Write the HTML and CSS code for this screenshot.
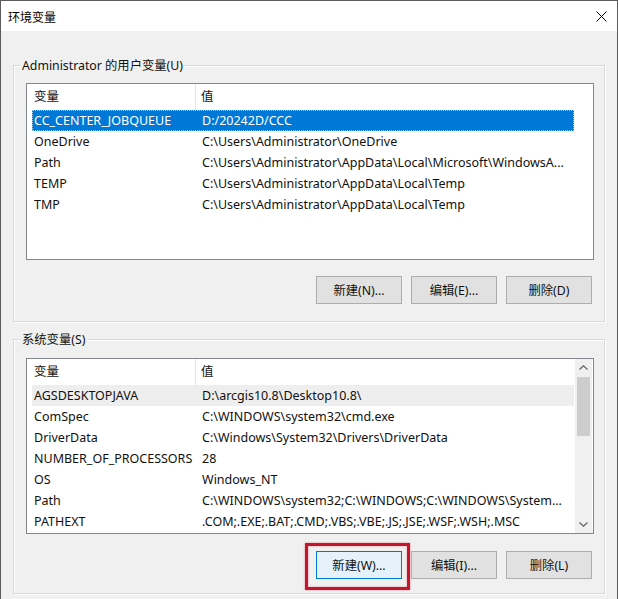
FILE: index.html
```html
<!DOCTYPE html>
<html lang="zh-CN">
<head>
<meta charset="utf-8">
<title>环境变量</title>
<link rel="stylesheet" href="styles.css">
</head>
<body>
<div class="window">
  <div class="titlebar">
    <span class="title">环境变量</span>
    <span class="close" aria-label="关闭">
      <svg width="11" height="11" viewBox="0 0 11 11"><path d="M0.5 0.5 L10.5 10.5 M10.5 0.5 L0.5 10.5" stroke="#000" stroke-width="1" fill="none"/></svg>
    </span>
  </div>

  <div class="group group-user">
    <div class="group-title">Administrator 的用户变量(U)</div>
    <div class="listview lv-user">
      <div class="lv-main">
        <div class="lv-header">
          <div class="hcell hc1">变量</div>
          <div class="hcell hc2">值</div>
        </div>
        <div class="row selected"><div class="c1">CC_CENTER_JOBQUEUE</div><div class="c2">D:/20242D/CCC</div></div>
        <div class="row"><div class="c1">OneDrive</div><div class="c2">C:\Users\Administrator\OneDrive</div></div>
        <div class="row"><div class="c1">Path</div><div class="c2">C:\Users\Administrator\AppData\Local\Microsoft\WindowsA...</div></div>
        <div class="row"><div class="c1">TEMP</div><div class="c2">C:\Users\Administrator\AppData\Local\Temp</div></div>
        <div class="row"><div class="c1">TMP</div><div class="c2">C:\Users\Administrator\AppData\Local\Temp</div></div>
      </div>
    </div>
    <div class="buttons">
      <button class="btn">新建(N)...</button>
      <button class="btn">编辑(E)...</button>
      <button class="btn">删除(D)</button>
    </div>
  </div>

  <div class="group group-sys">
    <div class="group-title">系统变量(S)</div>
    <div class="listview lv-sys">
      <div class="lv-main">
        <div class="lv-header">
          <div class="hcell hc1">变量</div>
          <div class="hcell hc2">值</div>
        </div>
        <div class="row hot"><div class="c1">AGSDESKTOPJAVA</div><div class="c2">D:\arcgis10.8\Desktop10.8\</div></div>
        <div class="row"><div class="c1">ComSpec</div><div class="c2">C:\WINDOWS\system32\cmd.exe</div></div>
        <div class="row"><div class="c1">DriverData</div><div class="c2">C:\Windows\System32\Drivers\DriverData</div></div>
        <div class="row"><div class="c1">NUMBER_OF_PROCESSORS</div><div class="c2">28</div></div>
        <div class="row"><div class="c1">OS</div><div class="c2">Windows_NT</div></div>
        <div class="row"><div class="c1">Path</div><div class="c2">C:\WINDOWS\system32;C:\WINDOWS;C:\WINDOWS\System...</div></div>
        <div class="row"><div class="c1">PATHEXT</div><div class="c2">.COM;.EXE;.BAT;.CMD;.VBS;.VBE;.JS;.JSE;.WSF;.WSH;.MSC</div></div>
      </div>
      <div class="scrollbar">
        <div class="sb-btn">
          <svg width="9" height="5" viewBox="0 0 9 5"><path d="M0.5 4.5 L4.5 0.8 L8.5 4.5" stroke="#606060" stroke-width="1.2" fill="none"/></svg>
        </div>
        <div class="sb-track"><div class="sb-thumb"></div></div>
        <div class="sb-btn">
          <svg width="9" height="5" viewBox="0 0 9 5"><path d="M0.5 0.5 L4.5 4.2 L8.5 0.5" stroke="#606060" stroke-width="1.2" fill="none"/></svg>
        </div>
      </div>
    </div>
    <div class="buttons">
      <div class="btn-wrap">
        <button class="btn btn-focus">新建(W)...</button>
        <span class="annot"></span>
      </div>
      <button class="btn">编辑(I)...</button>
      <button class="btn">删除(L)</button>
    </div>
  </div>
</div>
</body>
</html>
```

FILE: styles.css
```css
html, body {
  margin: 0;
  padding: 0;
  background: #f0f0f0;
}

body {
  font-family: "Noto Sans", "Noto Sans CJK SC", sans-serif;
  font-size: 12px;
  color: #111;
}

.window {
  width: 618px;
  height: 599px;
  box-sizing: border-box;
  border: 1px solid #5c5c5c;
  border-bottom: none;
  background: #f0f0f0;
  overflow: hidden;
}

.titlebar {
  height: 30px;
  background: #fff;
  display: flex;
  align-items: center;
  justify-content: space-between;
  padding: 0 10px 0 7px;
}

.title {
  font-family: "Noto Sans CJK SC", sans-serif;
  font-size: 12px;
  color: #000;
}

.close {
  display: flex;
  width: 11px;
  height: 11px;
}

.group {
  margin: 34px 12px 0 12px;
  border: 1px solid #d8d8d8;
  box-shadow: inset 1px 1px 0 #fff, 1px 1px 0 #fff;
  padding: 0 10px 0 12px;
}

.group-user {
  padding-bottom: 17px;
}

.group-sys {
  margin-top: 17px;
  padding-bottom: 14px;
}

.group-title {
  width: fit-content;
  margin: -9px 0 0 -6px;
  padding: 0 2px;
  line-height: 17px;
  height: 17px;
  background: #f0f0f0;
  color: #111;
  white-space: nowrap;
  font-size: 12.3px;
}

.listview {
  margin-top: 9px;
  border: 1px solid #828790;
  background: #fff;
  box-sizing: border-box;
  display: flex;
}

.lv-user {
  height: 177px;
}

.lv-sys {
  height: 176px;
  margin-top: 10px;
}

.lv-main {
  flex: 1;
  min-width: 0;
}

.lv-header {
  display: flex;
  height: 26px;
  width: 546px;
}

.hcell {
  line-height: 26px;
  white-space: nowrap;
  box-sizing: border-box;
  font-size: 12.5px;
}

.hc1 {
  width: 169px;
  padding-left: 7px;
  border-right: 1px solid #e5e5e5;
}

.hc2 {
  width: 377px;
  padding-left: 5px;
}

.row {
  display: flex;
  height: 21px;
  line-height: 21px;
  margin-left: 5px;
  width: 542px;
  white-space: nowrap;
  box-sizing: border-box;
  font-size: 12.5px;
}

.row .c1 {
  width: 170px;
  flex: none;
  padding-left: 2px;
  box-sizing: border-box;
  overflow: hidden;
}

.row .c2 {
  flex: 1;
  overflow: hidden;
}

.row.selected {
  background: #0078d7;
  color: #fff;
  outline: 1px dotted #9ccaf0;
  outline-offset: -1px;
}

.row.hot {
  background: #eeeeee;
}

.scrollbar {
  width: 17px;
  flex: none;
  background: #f0f0f0;
  display: flex;
  flex-direction: column;
  margin-right: 1px;
}

.sb-btn {
  height: 17px;
  display: flex;
  align-items: center;
  justify-content: center;
}

.sb-track {
  flex: 1;
  padding: 1px 2px 0 2px;
}

.sb-thumb {
  height: 59px;
  background: #cdcdcd;
}

.buttons {
  display: flex;
  justify-content: flex-end;
  gap: 9px;
  margin-top: 16px;
  padding-right: 2px;
}

.group-sys .buttons {
  margin-top: 17px;
}

.btn {
  width: 86px;
  height: 28px;
  box-sizing: border-box;
  border: 1px solid #adadad;
  background: #e1e1e1;
  font-family: "Noto Sans", "Noto Sans CJK SC", sans-serif;
  font-size: 12.3px;
  color: #111;
  padding: 0;
  margin: 0;
}

.btn-focus {
  background: #e5f1fb;
  border-color: #0078d7;
}

.btn-wrap {
  position: relative;
  display: flex;
}

.annot {
  position: absolute;
  left: -11px;
  top: -8px;
  width: 105px;
  height: 47px;
  box-sizing: border-box;
  border: 3px solid #c3162d;
  box-shadow: 0 0 2px #e88a96, inset 0 0 2px #e88a96;
  pointer-events: none;
}
```
